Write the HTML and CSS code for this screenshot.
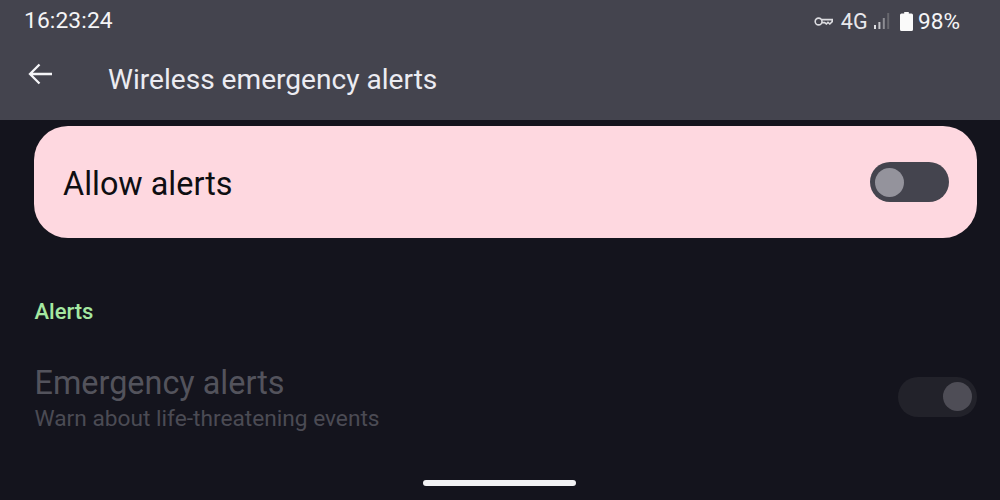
FILE: index.html
```html
<!DOCTYPE html>
<html lang="en">
<head>
<meta charset="utf-8">
<title>Wireless emergency alerts</title>
<link rel="stylesheet" href="styles.css">
</head>
<body>
<div class="screen">
  <header class="appbar">
    <div class="status">
      <span class="time">16:23:24</span>
      <div class="status-right">
        <svg class="ic-key" width="19" height="11" viewBox="0 0 19 11" fill="none" stroke="#dcdce0" stroke-width="1.6"><circle cx="4.6" cy="5.5" r="3.4"/><path d="M8 3.6H18.2V5.6L15.8 8L14 6.4L12.4 8L10.6 6.6H8"/></svg>
        <span class="net">4G</span>
        <svg class="ic-signal" width="18" height="18" viewBox="0 0 18 18" fill="#8d8d93"><rect x="1" y="13" width="2" height="4" fill="#e0e0e4"/><rect x="5.4" y="10" width="2" height="7" fill="#c4c4c8"/><rect x="9.8" y="6" width="2" height="11"/><rect x="14.2" y="1" width="2" height="16" fill="#67676d"/></svg>
        <svg class="ic-batt" width="13" height="19" viewBox="0 0 13 19" fill="#fafafa"><path d="M4.2 0H8.8V1.5H11.5Q13 1.5 13 3V17.5Q13 19 11.5 19H1.5Q0 19 0 17.5V3Q0 1.5 1.5 1.5H4.2Z"/></svg>
        <span class="pct">98%</span>
      </div>
    </div>
    <div class="toolbar">
      <svg class="ic-back" width="26" height="24" viewBox="0 0 26 24" fill="none" stroke="#f5f5f8" stroke-width="2.3"><path d="M25 12H3M12.5 2.5L3 12L12.5 21.5"/></svg>
      <span class="title">Wireless emergency alerts</span>
    </div>
  </header>
  <main class="content">
    <section class="allow-card">
      <span class="allow-label">Allow alerts</span>
      <span class="switch switch-off"><span class="knob knob-off"></span></span>
    </section>
    <h2 class="section-title">Alerts</h2>
    <section class="pref">
      <div class="pref-text">
        <div class="pref-title">Emergency alerts</div>
        <div class="pref-sub">Warn about life-threatening events</div>
      </div>
      <span class="switch switch-dim"><span class="knob knob-dim"></span></span>
    </section>
  </main>
  <div class="nav-area"><span class="nav-handle"></span></div>
</div>
</body>
</html>
```

FILE: styles.css
```css
* { box-sizing: border-box; }
html, body { margin: 0; padding: 0; }
body { width: 1000px; height: 500px; overflow: hidden; background: #14141d; font-family: Roboto, sans-serif; }
.screen { width: 1000px; height: 500px; display: flex; flex-direction: column; }

.appbar { height: 120px; background: #44444e; flex: none; }
.status { height: 42px; padding: 0 40px 0 24px; display: flex; align-items: center; justify-content: space-between; }
.time { font-size: 22.8px; line-height: 42px; color: #f4f4f6; letter-spacing: 0.1px; }
.status-right { display: flex; align-items: center; }
.ic-key { margin-right: 8px; }
.net { font-size: 21.5px; color: #e8e8ec; margin-right: 5.5px; }
.ic-signal { margin-right: 9px; }
.ic-batt { margin-right: 5px; }
.pct { font-size: 22.6px; color: #f4f4f6; }

.toolbar { display: flex; align-items: center; padding-left: 27px; height: 72px; }
.ic-back { margin-right: 55px; margin-bottom: 8px; }
.title { font-size: 28.1px; color: #ececf2; margin-top: 2px; }

.content { flex: 1; padding: 6px 23px 0 34px; }
.allow-card { height: 112px; border-radius: 34px; background: #fed8e0; display: flex; align-items: center; justify-content: space-between; padding: 0 28px 0 29px; }
.allow-label { font-size: 32.4px; color: #0e0e12; margin-top: 4px; }
.switch { width: 79px; height: 40px; border-radius: 20px; display: flex; align-items: center; padding: 0 5px; flex: none; }
.switch-off { background: #44444e; }
.knob { width: 29px; height: 29px; border-radius: 50%; }
.knob-off { background: #94939c; }
.switch-dim { background: #22222a; justify-content: flex-end; margin-bottom: 7px; }
.knob-dim { background: #4e4d56; }

.section-title { margin: 60px 0 0; padding-left: 0.5px; font-size: 22px; font-weight: 500; line-height: 28px; color: #a5e8a1; }
.pref { margin-top: 38px; display: flex; align-items: center; justify-content: space-between; }
.pref-text { padding-left: 0.5px; }
.pref-title { font-size: 32.4px; line-height: 38px; color: #53535c; }
.pref-sub { font-size: 22.7px; line-height: 34px; color: #4b4b54; }
.nav-area { height: 29px; flex: none; display: flex; justify-content: center; padding-top: 9px; }
.nav-handle { width: 153px; height: 6px; border-radius: 3px; background: #f2f2f4; margin-right: 1px; }
```
